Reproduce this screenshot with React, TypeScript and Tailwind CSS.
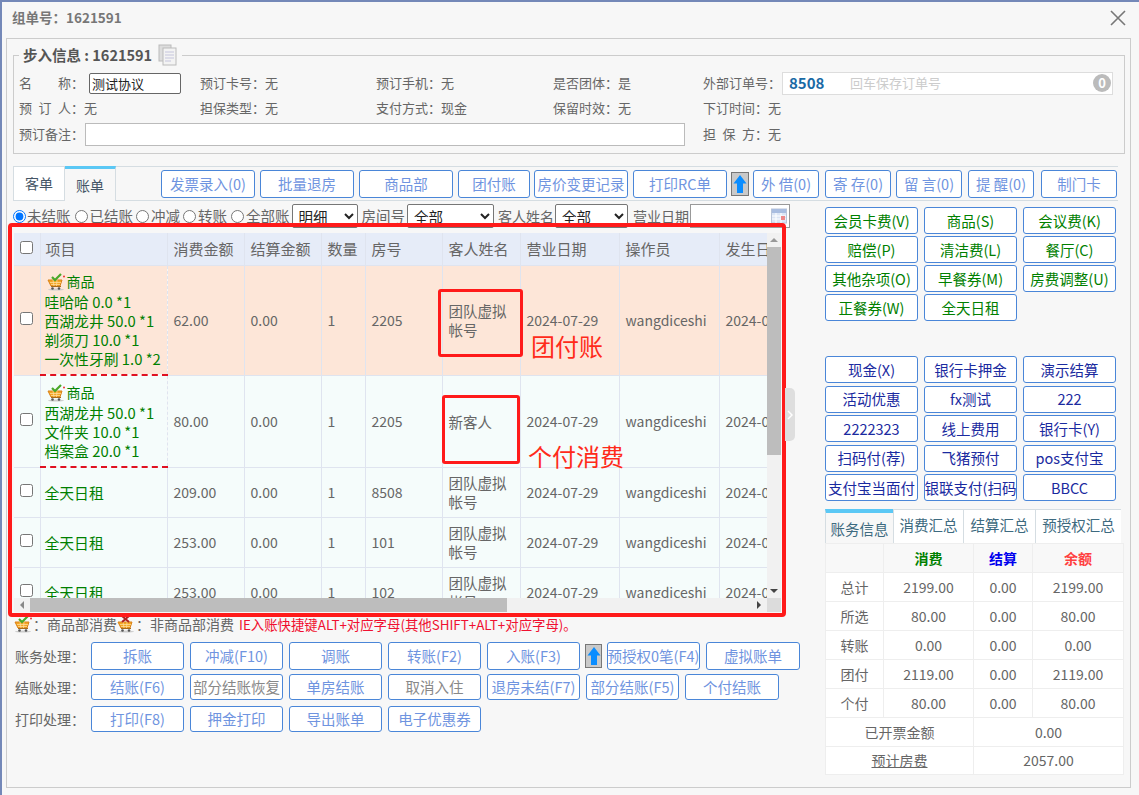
import type { ReactNode } from 'react';

const FONT = "font-['Noto_Sans_CJK_SC','Noto_Sans',sans-serif]";
const C = '\uFF1A';

const Cart = ({ bad = false }: { bad?: boolean }) => (
  <svg width="19" height="18" viewBox="0 0 19 18" className="shrink-0">
    <ellipse cx="9" cy="16.6" rx="8" ry="1" fill="#ccc" />
    <path d="M1 7h14l-2 6H4z" fill="#f5a623" stroke="#d9821a" strokeWidth="1" />
    <path d="M3 9.5h11M4 11.5h9M6 7l1 6M10 7l-.5 6" stroke="#fde3a8" strokeWidth="0.7" />
    <path d="M4 13.5h10" stroke="#a86a1a" strokeWidth="1" />
    <circle cx="5.5" cy="15.5" r="1.3" fill="#555" />
    <circle cx="12" cy="15.5" r="1.3" fill="#555" />
    {bad ? (
      <path d="M5 1l7 6M12 1L5 7" stroke="#b02020" strokeWidth="2" />
    ) : (
      <path d="M5 4l3 3 6-6" stroke="#4aa82a" strokeWidth="2.2" fill="none" />
    )}
    {!bad && <circle cx="17" cy="3.5" r="1" fill="#e33" />}
  </svg>
);

const ArrowBox = ({ className }: { className: string }) => (
  <div className={`${className} h-[24px] w-[18px] shrink-0 border border-[#777] bg-[#c9c9c9] flex items-center justify-center`}>
    <svg width="14" height="20" viewBox="0 0 14 20">
      <path d="M7 1l6.5 8.5H10V19H4V9.5H.5z" fill="#0a8dff" />
    </svg>
  </div>
);

const Btn = ({ className = '', tone = 'text-[#6f94e0]', children }: { className?: string; tone?: string; children: ReactNode }) => (
  <button className={`${className} ${tone} shrink-0 bg-white border border-[#4a86d8] rounded-[3px] text-[14.5px] whitespace-nowrap overflow-hidden flex items-center justify-center`}>
    {children}
  </button>
);

const Info = ({ className, label, value }: { className: string; label: string; value: string }) => (
  <div className={`${className} shrink-0 whitespace-nowrap`}>
    {label}{C}{value}
  </div>
);

const greenButtons = ['会员卡费(V)', '商品(S)', '会议费(K)', '赔偿(P)', '清洁费(L)', '餐厅(C)', '其他杂项(O)', '早餐券(M)', '房费调整(U)', '正餐券(W)', '全天日租'];
const navyButtons = ['现金(X)', '银行卡押金', '演示结算', '活动优惠', 'fx测试', '222', '2222323', '线上费用', '银行卡(Y)', '扫码付(荐)', '飞猪预付', 'pos支付宝', '支付宝当面付', '银联支付(扫码', 'BBCC'];

const rows = [
  { h: 'h-[110px]', bg: 'bg-[#fde6d8]', cart: true, items: ['哇哈哈 0.0 *1', '西湖龙井 50.0 *1', '剃须刀 10.0 *1', '一次性牙刷 1.0 *2'], fee: '62.00', room: '2205', guest: ['团队虚拟', '帐号'] },
  { h: 'h-[92px]', bg: 'bg-[#f5fcfb]', cart: true, items: ['西湖龙井 50.0 *1', '文件夹 10.0 *1', '档案盒 20.0 *1'], fee: '80.00', room: '2205', guest: ['新客人'] },
  { h: 'h-[50px]', bg: 'bg-[#f5fcfb]', cart: false, items: ['全天日租'], fee: '209.00', room: '8508', guest: ['团队虚拟', '帐号'] },
  { h: 'h-[50px]', bg: 'bg-[#f5fcfb]', cart: false, items: ['全天日租'], fee: '253.00', room: '101', guest: ['团队虚拟', '帐号'] },
  { h: 'h-[50px]', bg: 'bg-[#f5fcfb]', cart: false, items: ['全天日租'], fee: '253.00', room: '102', guest: ['团队虚拟', '帐号'] },
];

const summary = [
  ['总计', '2199.00', '0.00', '2199.00'],
  ['所选', '80.00', '0.00', '80.00'],
  ['转账', '0.00', '0.00', '0.00'],
  ['团付', '2119.00', '0.00', '2119.00'],
  ['个付', '80.00', '0.00', '80.00'],
];

const headers = ['项目', '消费金额', '结算金额', '数量', '房号', '客人姓名', '营业日期', '操作员', '发生日期'];
const cell = 'border-r border-b border-[#dfe4ef] px-[6px] text-left font-normal align-middle whitespace-nowrap overflow-hidden';
const checkCell = 'border-r border-b border-[#dfe4ef] align-middle';

const App = () => {
  return (
    <div className={`${FONT} relative w-[1139px] h-[795px] overflow-hidden bg-[#f7f7f7] border-t-2 border-l-2 border-[#7488b8] text-[14px] text-[#666]`}>
      {/* title */}
      <div className="h-[36px] pl-[10px] pr-[13px] pb-[5px] flex items-center justify-between">
        <span className="font-bold text-[13.5px] text-[#777]">组单号{C}1621591</span>
        <svg width="16" height="16" viewBox="0 0 16 16">
          <path d="M1 1l14 14M15 1L1 15" stroke="#777" strokeWidth="1.6" />
        </svg>
      </div>

      <div className="ml-[4px] w-[1125px] h-[750px] border border-[#ccc] pl-[6px]">
        {/* booking info */}
        <fieldset className="mt-[6px] w-[1112px] h-[109px] border border-[#ccc] text-[13px] leading-[20px]">
          <legend className="ml-[5px] px-[4px] h-[20px] flex items-center font-bold text-[14.5px] text-[#555] whitespace-pre">
            步入信息 : 1621591
            <svg width="20" height="22" viewBox="0 0 20 22" className="ml-[6px] -my-[1px]">
              <rect x="1" y="1" width="12" height="16" fill="#ddd" stroke="#bbb" />
              <rect x="5" y="4" width="13" height="17" fill="#f3f3f3" stroke="#bbb" />
              <path d="M7 8h9M7 11h9M7 14h9M7 17h6" stroke="#c5c5dc" />
            </svg>
          </legend>
          <div className="flex items-center h-[24px] mt-[6px] pl-[5px]">
            <div className="w-[70px] flex justify-between pr-[5px] shrink-0"><span>名</span><span>称{C}</span></div>
            <div className="w-[92px] h-[21px] shrink-0 border border-[#666] rounded-[2px] bg-white text-[#222] px-[2px] leading-[19px]">测试协议</div>
            <Info className="ml-[19px] w-[176px]" label="预订卡号" value="无" />
            <Info className="w-[177px]" label="预订手机" value="无" />
            <Info className="w-[150px]" label="是否团体" value="是" />
            <span className="w-[79px] shrink-0 whitespace-nowrap">外部订单号{C}</span>
            <div className="w-[331px] h-[23px] shrink-0 bg-white border border-[#ddd] flex items-center pl-[6px] pr-[1px]">
              <span className="w-[61px] text-[15px] font-bold text-[#1a6aa5]">8508</span>
              <span className="text-[#ccc]">回车保存订单号</span>
              <span className="ml-auto w-[18px] h-[18px] rounded-full bg-[#bbb] text-white font-bold text-[13px] flex items-center justify-center">0</span>
            </div>
          </div>
          <div className="flex items-center h-[24px] mt-[1px] pl-[5px]">
            <div className="w-[65px] flex justify-between shrink-0"><span>预</span><span>订</span><span>人{C}</span></div>
            <span className="w-[116px] shrink-0">无</span>
            <Info className="w-[176px]" label="担保类型" value="无" />
            <Info className="w-[177px]" label="支付方式" value="现金" />
            <Info className="w-[150px]" label="保留时效" value="无" />
            <Info className="w-[100px]" label="下订时间" value="无" />
          </div>
          <div className="flex items-center h-[24px] mt-[2px] pl-[5px]">
            <span className="w-[66px] shrink-0 whitespace-nowrap">预订备注{C}</span>
            <div className="w-[600px] h-[23px] shrink-0 bg-white border border-[#bbb]"></div>
            <div className="ml-[18px] w-[65px] flex justify-between shrink-0"><span>担</span><span>保</span><span>方{C}</span></div>
            <span>无</span>
          </div>
        </fieldset>

        {/* tab bar */}
        <div className="mt-[12px] w-[1105px] h-[35px] border-t border-b border-[#d5dde2] flex items-center">
          <div className="w-[52px] h-[33px] border-l border-r border-[#d5dde2] bg-white text-[#456] flex items-center justify-center">客单</div>
          <div className="w-[51px] h-[35px] -mt-[1px] -mb-[1px] border-t-[3px] border-t-[#5bc8f5] border-r border-r-[#d5dde2] bg-[#f7f7f7] text-[#456] flex items-center justify-center">账单</div>
          <div className="ml-[45px] flex items-center gap-[5px]">
            <Btn className="w-[94px] h-[28px]">发票录入(0)</Btn>
            <Btn className="w-[94px] h-[28px]">批量退房</Btn>
            <Btn className="w-[94px] h-[28px]">商品部</Btn>
            <Btn className="w-[72px] h-[28px]">团付账</Btn>
            <Btn className="w-[94px] h-[28px] -ml-[1px]">房价变更记录</Btn>
            <Btn className="w-[94px] h-[28px]">打印RC单</Btn>
            <ArrowBox className="-ml-[1px]" />
            <Btn className="w-[66px] h-[28px] -ml-[1px]">外 借(0)</Btn>
            <Btn className="w-[66px] h-[28px] ml-[1px]">寄 存(0)</Btn>
            <Btn className="w-[66px] h-[28px]">留 言(0)</Btn>
            <Btn className="w-[66px] h-[28px] ml-[1px]">提 醒(0)</Btn>
            <Btn className="w-[76px] h-[28px] ml-[2px]">制门卡</Btn>
          </div>
        </div>

        <div className="flex">
          {/* left column */}
          <div className="w-[812px] shrink-0">
            <div className="mt-[3px] h-[24px] flex items-center whitespace-nowrap text-[14.5px]">
              <input type="radio" name="st" defaultChecked className="w-[13px] h-[13px] m-0" />
              <span className="ml-px">未结账</span>
              <input type="radio" name="st" className="ml-[4px] w-[13px] h-[13px]" />
              <span className="ml-[2px]">已结账</span>
              <input type="radio" name="st" className="ml-[3px] w-[13px] h-[13px]" />
              <span className="ml-[2px]">冲减</span>
              <input type="radio" name="st" className="ml-[3px] w-[13px] h-[13px]" />
              <span className="ml-[2px]">转账</span>
              <input type="radio" name="st" className="ml-[4px] w-[13px] h-[13px]" />
              <span className="ml-[2px]">全部账</span>
              <select className="ml-[2px] w-[66px] h-[24px] bg-white border border-[#767676] rounded-[2px] text-[#222] pl-[2px]"><option>明细</option></select>
              <span className="ml-[4px]">房间号</span>
              <select className="ml-[2px] w-[87px] h-[24px] bg-white border border-[#767676] rounded-[2px] text-[#222] pl-[2px]"><option>全部</option></select>
              <span className="ml-[4px] w-[57px] text-[14px]">客人姓名</span>
              <select className="w-[73px] h-[24px] bg-white border border-[#767676] rounded-[2px] text-[#222] pl-[2px]"><option>全部</option></select>
              <span className="ml-[5px] w-[57px] text-[14px]">营业日期</span>
              <div className="w-[100px] h-[24px] bg-white border border-[#999] flex items-center justify-end pr-[2px]">
                <svg width="16" height="16" viewBox="0 0 16 16">
                  <rect x="0.5" y="1" width="15" height="14" fill="#dbe5f5" stroke="#b9c4d8" />
                  <rect x="1" y="1" width="14" height="4" fill="#a9bde0" />
                  <path d="M1 8h14M1 11h14M5 5v10M10 5v10" stroke="#fff" />
                  <rect x="10" y="8" width="4" height="4" fill="#e88" />
                </svg>
              </div>
            </div>

            {/* bill table */}
            <div className="mt-[5px] ml-px w-[767px] h-[379px] flex flex-col">
              <div className="flex h-[365px]">
                <div className="w-[753px] h-[365px] overflow-hidden">
                  <table className="table-fixed border-collapse w-[780px] text-[14px] leading-[19px]">
                    <colgroup>
                      <col className="w-[26px]" />
                      <col className="w-[127px]" />
                      <col className="w-[77px]" />
                      <col className="w-[77px]" />
                      <col className="w-[44px]" />
                      <col className="w-[77px]" />
                      <col className="w-[78px]" />
                      <col className="w-[99px]" />
                      <col className="w-[100px]" />
                      <col className="w-[75px]" />
                    </colgroup>
                    <thead>
                      <tr className="h-[32px] bg-[#e6ecf8] text-[15px]">
                        <th className={checkCell}><input type="checkbox" className="block mx-auto -mt-[3px]" /></th>
                        {headers.map((h, i) => (
                          <th key={h} className={`${cell} ${i === 0 ? '!px-[5px]' : ''}`}>{h}</th>
                        ))}
                      </tr>
                    </thead>
                    <tbody>
                      {rows.map((r, i) => (
                        <tr key={i} className={`${r.h} ${r.bg}`}>
                          <td className={checkCell}><input type="checkbox" className="block mx-auto -mt-[3px]" /></td>
                          <td className={`${cell} !px-[4px] text-[#008000] text-[14.8px] ${r.cart ? '!border-b-2 !border-b-[#e01020] border-dashed' : ''}`}>
                            {r.cart && <div className="flex items-center h-[21px] pl-[2px]"><Cart /><span className="ml-px text-[14px]">商品</span></div>}
                            {r.items.map((t) => <div key={t}>{t}</div>)}
                          </td>
                          <td className={cell}>{r.fee}</td>
                          <td className={cell}>0.00</td>
                          <td className={cell}>1</td>
                          <td className={cell}>{r.room}</td>
                          <td className={`${cell} text-[14.5px]`}>{r.guest.map((g) => <div key={g}>{g}</div>)}</td>
                          <td className={cell}>2024-07-29</td>
                          <td className={cell}>wangdiceshi</td>
                          <td className={cell}>2024-07-29</td>
                        </tr>
                      ))}
                    </tbody>
                  </table>
                </div>
                <div className="w-[14px] h-[365px] bg-[#f1f1f1] flex flex-col items-center justify-between">
                  <div className="flex flex-col items-center w-full">
                    <svg width="8" height="14" viewBox="0 0 8 14"><path d="M0 9l4-4 4 4z" fill="#999" /></svg>
                    <div className="w-full h-[208px] bg-[#bdbdbd]"></div>
                  </div>
                  <svg width="8" height="14" viewBox="0 0 8 14"><path d="M0 5l4 4 4-4z" fill="#444" /></svg>
                </div>
              </div>
              <div className="flex h-[14px] bg-[#f1f1f1]">
                <div className="w-[16px] flex items-center justify-center">
                  <svg width="6" height="8" viewBox="0 0 6 8"><path d="M5 0L1 4l4 4z" fill="#888" /></svg>
                </div>
                <div className="w-[477px] bg-[#bdbdbd]"></div>
                <div className="w-[260px] flex items-center justify-end pr-[5px]">
                  <svg width="6" height="8" viewBox="0 0 6 8"><path d="M1 0l4 4-4 4z" fill="#444" /></svg>
                </div>
                <div className="w-[14px] bg-[#dcdcdc]"></div>
              </div>
            </div>

            <div className="mt-[2px] h-[20px] ml-[1px] flex items-center whitespace-nowrap">
              <Cart />
              <span>{C}商品部消费</span>
              <Cart bad />
              <span>{C}非商品部消费</span>
              <span className="ml-[5px] text-[13.4px] text-[#f01030]">IE入账快捷键ALT+对应字母(其他SHIFT+ALT+对应字母)。</span>
            </div>

            <div className="mt-[8px] flex items-center gap-[6px] ml-[2px]">
              <span className="w-[70px] whitespace-nowrap">账务处理{C}</span>
              <Btn className="w-[93px] h-[28px]">拆账</Btn>
              <Btn className="w-[93px] h-[28px]">冲减(F10)</Btn>
              <Btn className="w-[93px] h-[28px]">调账</Btn>
              <Btn className="w-[93px] h-[28px]">转账(F2)</Btn>
              <Btn className="w-[93px] h-[28px]">入账(F3)</Btn>
              <ArrowBox className="-ml-[1px] !w-[17px]" />
              <Btn className="w-[93px] h-[28px] -ml-[1px]">预授权0笔(F4)</Btn>
              <Btn className="w-[94px] h-[28px]">虚拟账单</Btn>
            </div>
            <div className="mt-[4px] flex items-center gap-[6px] ml-[2px]">
              <span className="w-[70px] whitespace-nowrap">结账处理{C}</span>
              <Btn className="w-[93px] h-[26px]">结账(F6)</Btn>
              <Btn className="w-[93px] h-[26px]" tone="text-[#888]">部分结账恢复</Btn>
              <Btn className="w-[93px] h-[26px]">单房结账</Btn>
              <Btn className="w-[93px] h-[26px]" tone="text-[#888]">取消入住</Btn>
              <Btn className="w-[93px] h-[26px]">退房未结(F7)</Btn>
              <Btn className="w-[93px] h-[26px]">部分结账(F5)</Btn>
              <Btn className="w-[94px] h-[26px]">个付结账</Btn>
            </div>
            <div className="mt-[6px] flex items-center gap-[6px] ml-[2px]">
              <span className="w-[70px] whitespace-nowrap">打印处理{C}</span>
              <Btn className="w-[93px] h-[26px]">打印(F8)</Btn>
              <Btn className="w-[93px] h-[26px]">押金打印</Btn>
              <Btn className="w-[93px] h-[26px]">导出账单</Btn>
              <Btn className="w-[93px] h-[26px]">电子优惠券</Btn>
            </div>
          </div>

          {/* right column */}
          <div className="w-[299px] shrink-0">
            <div className="mt-[6px] grid grid-cols-[93px_93px_93px] gap-x-[6px] gap-y-[2px]">
              {greenButtons.map((t) => (
                <Btn key={t} className="h-[27px]" tone="text-[#008000]">{t}</Btn>
              ))}
            </div>
            <div className="mt-[35px] grid grid-cols-[93px_93px_93px] gap-x-[6px] gap-y-[2.5px]">
              {navyButtons.map((t) => (
                <Btn key={t} className="h-[27px]" tone="text-[#1a2aa0]">{t}</Btn>
              ))}
            </div>
            <div className="mt-[8px] flex h-[34px] text-[#3d6a80] text-[14.5px] whitespace-nowrap">
              <div className="w-[68px] h-[34px] pt-[2px] border-t-[4px] border-t-[#5bc8f5] border-l border-[#d5dde2] flex items-center justify-center">账务信息</div>
              <div className="w-[71px] pb-[4px] border-t border-x border-[#d5dde2] bg-white flex items-center justify-center">消费汇总</div>
              <div className="w-[72px] pb-[4px] border-t border-r border-[#d5dde2] bg-white flex items-center justify-center">结算汇总</div>
              <div className="w-[85px] pb-[4px] border-t border-[#d5dde2] bg-white flex items-center justify-center">预授权汇总</div>
            </div>
            <table className="table-fixed border-collapse w-[298px] text-center">
              <colgroup>
                <col className="w-[58px]" />
                <col className="w-[90px]" />
                <col className="w-[59px]" />
                <col className="w-[91px]" />
              </colgroup>
              <tbody>
                <tr className="h-[29px] bg-[#f8f8f8] font-bold">
                  <td className="border border-[#eee]"></td>
                  <td className="border border-[#eee] text-[#008000]">消费</td>
                  <td className="border border-[#eee] text-[#0000ee]">结算</td>
                  <td className="border border-[#eee] text-[#ff4040]">余额</td>
                </tr>
                {summary.map((r) => (
                  <tr key={r[0]} className="h-[29px] bg-white">
                    {r.map((v, i) => (
                      <td key={i} className="border border-[#eee]">{v}</td>
                    ))}
                  </tr>
                ))}
                <tr className="h-[29px] bg-white">
                  <td colSpan={2} className="border border-[#eee]">已开票金额</td>
                  <td colSpan={2} className="border border-[#eee]">0.00</td>
                </tr>
                <tr className="h-[28px] bg-white">
                  <td colSpan={2} className="border border-[#eee] underline">预计房费</td>
                  <td colSpan={2} className="border border-[#eee]">2057.00</td>
                </tr>
              </tbody>
            </table>
          </div>
        </div>
      </div>

      {/* screenshot annotations on top */}
      <div className="absolute left-[6px] top-[221px] w-[778px] h-[394px] border-[4px] border-[#ff1a1a] rounded-[4px]"></div>
      <div className="absolute left-[436px] top-[287px] w-[85px] h-[68px] border-[3px] border-[#ff1a1a] rounded-[3px]"></div>
      <div className="absolute left-[440px] top-[393px] w-[78px] h-[69px] border-[3px] border-[#ff1a1a] rounded-[3px]"></div>
      <div className="absolute left-[529px] top-[327px] text-[24px] leading-[34px] text-[#ff2a1a]">团付账</div>
      <div className="absolute left-[526px] top-[437px] text-[24px] leading-[34px] text-[#ff2a1a]">个付消费</div>
      <div className="absolute left-[783px] top-[386px] w-[10px] h-[53px] bg-[#dedede] rounded-r-[5px] flex items-center justify-center">
        <svg width="6" height="10" viewBox="0 0 6 10"><path d="M1 1l4 4-4 4" stroke="#fff" strokeWidth="1.5" fill="none" /></svg>
      </div>
    </div>
  );
};

export default App;
